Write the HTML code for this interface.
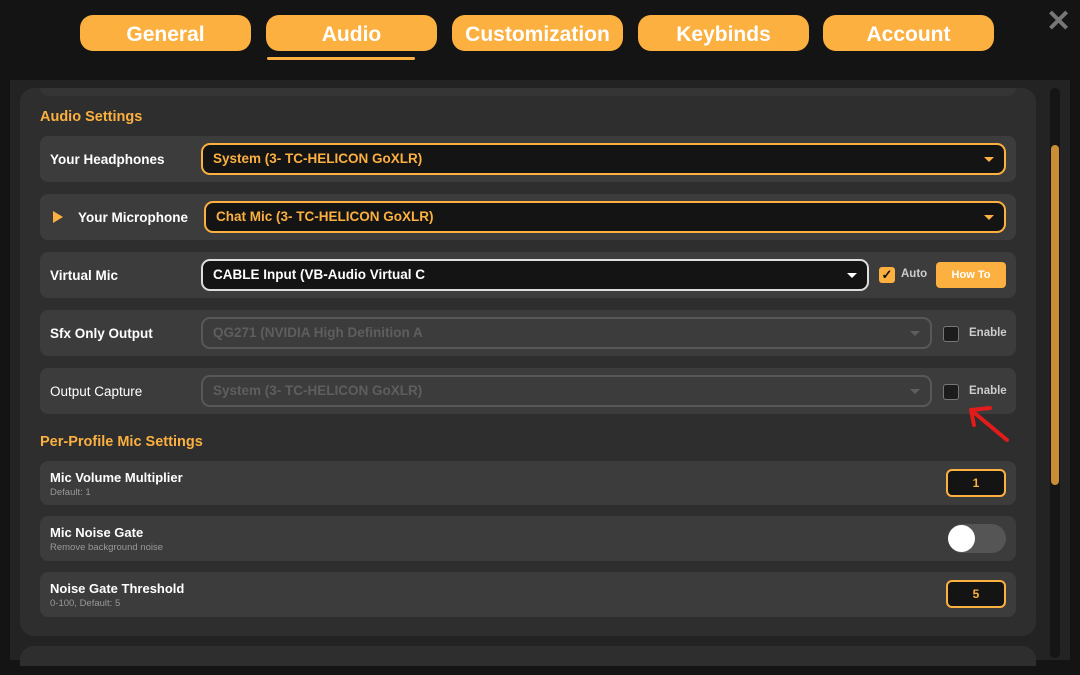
<!DOCTYPE html>
<html><head><style>
*{box-sizing:border-box;margin:0;padding:0}
body{width:1080px;height:675px;background:#141414;font-family:"Liberation Sans",sans-serif;position:relative;overflow:hidden;color:#fff}
.tab{position:absolute;top:15px;width:171px;height:36px;background:#fbb040;border-radius:13px;color:#fff;font-weight:bold;font-size:21px;text-align:center;line-height:39px}
.area{position:absolute;left:10px;top:80px;width:1060px;height:580px;background:#232323}
.panel{position:absolute;left:20px;top:88px;width:1016px;height:548px;background:#2e2e2e;border-radius:14px}
.row{position:absolute;left:40px;width:976px;background:#3c3c3c;border-radius:8px}
.lbl{position:absolute;left:10px;font-weight:bold;font-size:13.5px;color:#fff}
.sel{position:absolute;height:32px;border-radius:9px;background:#141414;border:2px solid #fbb040;font-weight:bold;font-size:13.5px;line-height:28px;padding-left:10px;color:#fbb040}
.sel:after{content:"";position:absolute;right:10px;top:12px;border-left:5px solid transparent;border-right:5px solid transparent;border-top:5px solid currentColor}
.dis{background:transparent;border-color:#585858;color:#5e5e5e}
.h{position:absolute;left:40px;color:#fbb040;font-weight:bold;font-size:14.5px}
.cb{position:absolute;width:16px;height:16px;border:1.5px solid #777;border-radius:3px;background:#1c1c1c}
.en{position:absolute;font-size:11.5px;font-weight:bold;color:#ccc}
.sub{position:absolute;left:10px;font-size:9.5px;color:#999}
.num{position:absolute;right:10px;width:60px;height:28px;border:2px solid #fbb040;border-radius:6px;background:#141414;color:#fbb040;font-weight:bold;font-size:12px;text-align:center;line-height:24px}
</style></head><body>
<div class="tab" style="left:80px">General</div>
<div class="tab" style="left:266px">Audio</div>
<div class="tab" style="left:452px">Customization</div>
<div class="tab" style="left:638px">Keybinds</div>
<div class="tab" style="left:823px">Account</div>
<div style="position:absolute;left:267px;top:57px;width:148px;height:3px;background:#fbb040;border-radius:2px"></div>
<div style="position:absolute;left:1046px;top:4px;font-size:30px;font-weight:bold;color:#777">✕</div>
<div class="area"></div>
<div class="panel"></div>
<div style="position:absolute;left:40px;top:88px;width:976px;height:8px;background:#353535;border-radius:0 0 8px 8px"></div>
<div style="position:absolute;left:1050px;top:88px;width:10px;height:570px;background:#151515;border-radius:5px"></div>
<div style="position:absolute;left:1051px;top:145px;width:8px;height:340px;background:#c98d35;border-radius:4px"></div>
<div style="position:absolute;left:20px;top:646px;width:1016px;height:20px;background:#2e2e2e;border-radius:14px 14px 0 0"></div>
<div class="h" style="top:109px">Audio Settings</div>
<div class="row" style="top:136px;height:46px"><div class="lbl" style="top:16px">Your Headphones</div><div class="sel" style="left:161px;top:7px;width:805px">System (3- TC-HELICON GoXLR)</div></div>
<div class="row" style="top:194px;height:46px"><div style="position:absolute;left:13px;top:17px;border-top:6px solid transparent;border-bottom:6px solid transparent;border-left:10px solid #fbb040"></div><div class="lbl" style="top:16px;left:38px">Your Microphone</div><div class="sel" style="left:164px;top:7px;width:802px">Chat Mic (3- TC-HELICON GoXLR)</div></div>
<div class="row" style="top:252px;height:46px"><div class="lbl" style="top:16px">Virtual Mic</div><div class="sel" style="left:161px;top:7px;width:668px;border-color:#ddd;color:#fff">CABLE Input (VB-Audio Virtual C</div>
<div style="position:absolute;left:839px;top:15px;width:16px;height:16px;background:#fbb040;border-radius:3px;color:#111;font-size:13px;line-height:16px;text-align:center;font-weight:bold">✓</div><div class="en" style="left:861px;top:16px">Auto</div>
<div style="position:absolute;left:896px;top:10px;width:70px;height:26px;background:#fbb040;border-radius:4px;font-size:11px;font-weight:bold;text-align:center;line-height:27px">How To</div></div>
<div class="row" style="top:310px;height:46px"><div class="lbl" style="top:16px">Sfx Only Output</div><div class="sel dis" style="left:161px;top:7px;width:731px">QG271 (NVIDIA High Definition A</div><div class="cb" style="left:903px;top:16px"></div><div class="en" style="left:929px;top:17px">Enable</div></div>
<div class="row" style="top:368px;height:46px"><div class="lbl" style="top:16px;font-weight:normal">Output Capture</div><div class="sel dis" style="left:161px;top:7px;width:731px">System (3- TC-HELICON GoXLR)</div><div class="cb" style="left:903px;top:16px"></div><div class="en" style="left:929px;top:17px">Enable</div></div>
<svg style="position:absolute;left:965px;top:403px" width="50" height="42"><path d="M6 7 L42 37 M6 7 L9 22 M6 7 L25 5" stroke="#e31b1b" stroke-width="4" fill="none" stroke-linecap="round"/></svg>
<div class="h" style="top:434px">Per-Profile Mic Settings</div>
<div class="row" style="top:461px;height:44px"><div class="lbl" style="top:9px;font-size:13px">Mic Volume Multiplier</div><div class="sub" style="top:26px">Default: 1</div><div class="num" style="top:8px">1</div></div>
<div class="row" style="top:516px;height:45px"><div class="lbl" style="top:9px;font-size:13px">Mic Noise Gate</div><div class="sub" style="top:26px">Remove background noise</div><div style="position:absolute;right:10px;top:8px;width:58px;height:29px;background:#555;border-radius:15px"><div style="position:absolute;left:0;top:1px;width:27px;height:27px;background:#fff;border-radius:50%"></div></div></div>
<div class="row" style="top:572px;height:45px"><div class="lbl" style="top:9px;font-size:13px">Noise Gate Threshold</div><div class="sub" style="top:26px">0-100, Default: 5</div><div class="num" style="top:8px">5</div></div>
</body></html>
